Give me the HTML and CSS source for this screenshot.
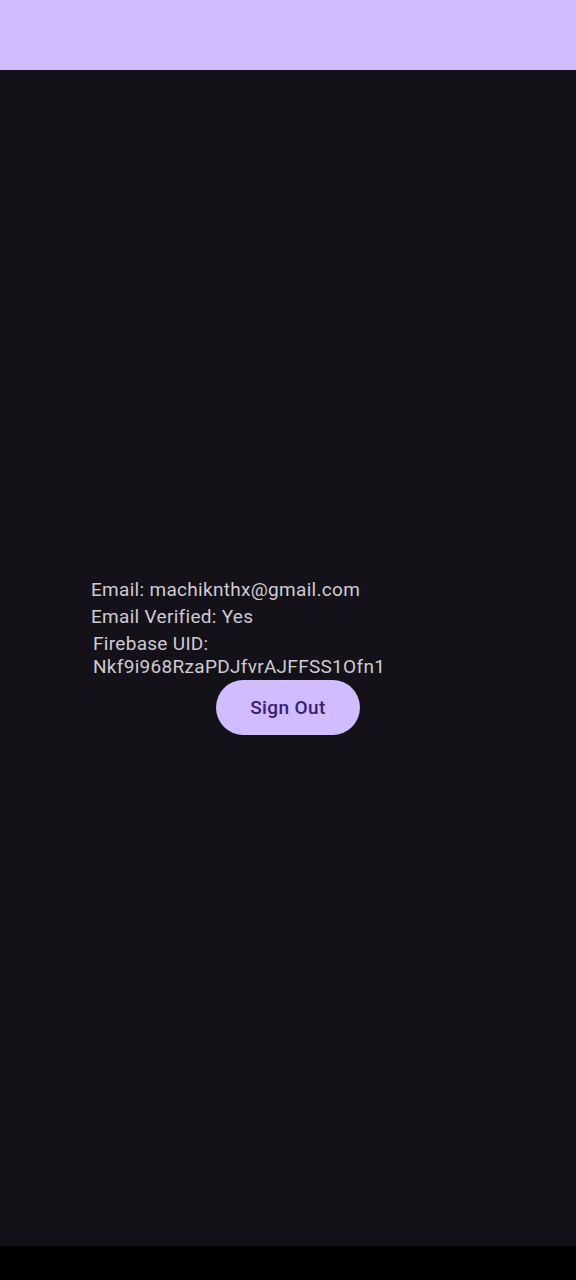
FILE: index.html
```html
<!DOCTYPE html>
<html>
<head>
<meta charset="utf-8">
<link rel="stylesheet" href="styles.css">
</head>
<body>
<div class="screen">
  <header class="topbar"></header>
  <main class="content">
    <div class="info">
      <p class="line">Email: machiknthx@gmail.com</p>
      <p class="line">Email Verified: Yes</p>
      <p class="uid">Firebase UID:<br>Nkf9i968RzaPDJfvrAJFFSS1Ofn1</p>
    </div>
    <button class="signout">Sign Out</button>
  </main>
  <footer class="navbar"></footer>
</div>
</body>
</html>
```
FILE: styles.css
```css
html, body {
  margin: 0;
  padding: 0;
  background: #000;
}
.screen {
  width: 576px;
  height: 1280px;
  display: flex;
  flex-direction: column;
  background: #141218;
  font-family: Roboto, "Noto Sans", sans-serif;
}
.topbar {
  height: 70px;
  flex: none;
  background: #d0bcff;
}
.content {
  flex: 1;
  display: flex;
  flex-direction: column;
  justify-content: center;
  padding-bottom: 5px;
}
.info {
  padding-left: 91px;
  color: #cfcad3;
  font-size: 19px;
  letter-spacing: 0.3px;
}
.line {
  margin: 0;
  line-height: 27px;
}
.uid {
  margin: 2px 0 0 2px;
  line-height: 23px;
}
.signout {
  align-self: center;
  margin-top: 2px;
  width: 144px;
  height: 55px;
  border: none;
  border-radius: 28px;
  background: #d0bcff;
  color: #381e72;
  font-family: Roboto, "Noto Sans", sans-serif;
  font-size: 19px;
  font-weight: 500;
  letter-spacing: 0.4px;
}
.navbar {
  height: 34px;
  flex: none;
  background: #000;
}
```
